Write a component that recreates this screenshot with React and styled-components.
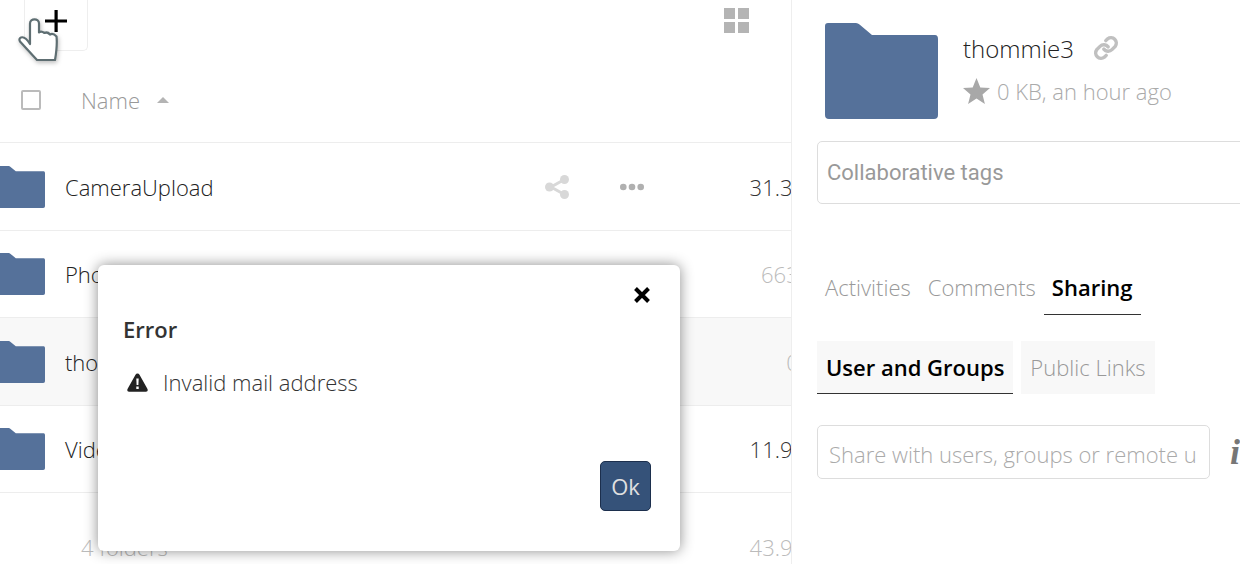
import React from "react";
import styled, { createGlobalStyle } from "styled-components";

const Global = createGlobalStyle`
  html, body { margin: 0; padding: 0; height: 564px; overflow: hidden; background: #fff; }
  body { font-family: "Open Sans", sans-serif; font-weight: 300; font-size: 22px; color: #222; }
  * { box-sizing: border-box; }
`;

const Page = styled.div`
  position: relative;
  display: flex;
  width: 1240px;
  height: 564px;
  overflow: hidden;
`;
const Main = styled.main`
  width: 792px;
  flex: none;
  height: 564px;
  overflow: hidden;
  border-right: 1px solid #eee;
`;
const Toolbar = styled.div`
  display: flex;
  justify-content: space-between;
  height: 57px;
  padding: 0 42px 0 24px;
`;
const AddButton = styled.div`
  width: 64px;
  height: 51px;
  border: 1px solid #eee;
  border-top: none;
  border-radius: 0 0 5px 5px;
  color: #000;
  display: flex;
  align-items: flex-start;
  justify-content: center;
  padding-top: 10px;
`;
const ViewToggle = styled.div`
  margin-top: 8px;
  display: grid;
  grid-template-columns: 11px 11px;
  grid-auto-rows: 11px;
  gap: 3px;
  width: 25px;
  height: 25px;
`;
const Tile = styled.span`
  background: #b4b4b4;
`;
const HeaderRow = styled.div`
  display: flex;
  align-items: center;
  height: 86px;
  padding-left: 21px;
  border-bottom: 1px solid #ededed;
  color: #999;
`;
const Check = styled.span`
  width: 20px;
  height: 20px;
  border: 2px solid #bbb;
  border-radius: 2px;
  margin-right: 40px;
`;
const Caret = styled.span`
  width: 0;
  height: 0;
  margin-left: 17px;
  border-left: 6.5px solid transparent;
  border-right: 6.5px solid transparent;
  border-bottom: 6px solid #b4b4b4;
`;
const Row = styled.div`
  display: flex;
  align-items: center;
  width: 831px;
  height: ${p => p.$h}px;
  border-bottom: 1px solid #ededed;
  background: ${p => (p.$selected ? "#f8f8f8" : "#fff")};
`;
const RowFolder = styled.svg`
  width: 50px;
  height: 42px;
  flex: none;
  margin-left: -5px;
  margin-right: 20px;
`;
const FileName = styled.span`
  flex: 1;
  color: #222;
`;
const Actions = styled.div`
  display: flex;
  align-items: center;
  gap: 51px;
  margin-right: 103px;
`;
const Size = styled.span`
  width: 84px;
  text-align: right;
  white-space: nowrap;
  color: ${p => (p.$faint ? "#bbb" : "#333")};
`;
const Footer = styled.div`
  display: flex;
  align-items: center;
  justify-content: space-between;
  width: 831px;
  height: 72px;
  padding-left: 81px;
  padding-top: 35px;
  color: #bbb;
  font-size: 22px;
`;
const Side = styled.aside`
  flex: 1;
  min-width: 0;
  height: 564px;
  overflow: hidden;
  padding: 23px 0 0 25px;
`;
const Head = styled.div`
  display: flex;
  padding-left: 8px;
`;
const BigFolder = styled.svg`
  width: 113px;
  height: 96px;
  flex: none;
  margin-right: 25px;
`;
const Meta = styled.div`
  padding-top: 5px;
`;
const Title = styled.div`
  display: flex;
  align-items: center;
  gap: 19px;
  font-size: 24px;
  height: 40px;
  color: #222;
`;
const Sub = styled.div`
  display: flex;
  align-items: center;
  gap: 7px;
  height: 46px;
  color: #aaa;
`;
const Tags = styled.div`
  width: 440px;
  height: 63px;
  margin-top: 22px;
  border: 1px solid #ddd;
  border-radius: 5px;
  display: flex;
  align-items: center;
  padding-left: 9px;
  font-family: Roboto, sans-serif;
  font-weight: 400;
  font-size: 22px;
  color: #999;
  white-space: nowrap;
`;
const Tabs = styled.div`
  display: flex;
  margin-top: 59px;
  gap: 0;
`;
const Tab = styled.div`
  padding: 0 8px;
  height: 52px;
  margin-right: ${p => p.$gap || 0}px;
  line-height: 49px;
  color: ${p => (p.$active ? "#000" : "#999")};
  font-weight: ${p => (p.$active ? 600 : 300)};
  border-bottom: ${p => (p.$active ? "1px solid #333" : "none")};
`;
const SubTabs = styled.div`
  display: flex;
  gap: 8px;
  margin-top: 26px;
`;
const SubTab = styled.div`
  height: 53px;
  padding: 0 9px;
  line-height: 52px;
  background: #f8f8f8;
  color: ${p => (p.$active ? "#000" : "#999")};
  font-weight: ${p => (p.$active ? 600 : 300)};
  border-bottom: ${p => (p.$active ? "1px solid #333" : "none")};
`;
const ShareRow = styled.div`
  display: flex;
  align-items: center;
  margin-top: 31px;
`;
const ShareInput = styled.div`
  width: 393px;
  height: 54px;
  flex: none;
  border: 1px solid #ddd;
  border-radius: 5px;
  padding: 0 10px 0 11px;
  line-height: 56px;
  color: #aaa;
  white-space: nowrap;
  overflow: hidden;
`;
const InfoGlyph = styled.span`
  margin-left: 20px;
  font-family: "Liberation Serif", serif;
  font-style: italic;
  font-weight: 700;
  font-size: 36px;
  line-height: 1;
  color: #777;
`;
const Dialog = styled.div`
  position: absolute;
  left: 98px;
  top: 265px;
  width: 582px;
  height: 286px;
  background: #fff;
  border-radius: 6px;
  box-shadow: 0 0 14px rgba(0, 0, 0, 0.45);
  display: flex;
  flex-direction: column;
  padding: 0 29px 40px 25px;
`;
const CloseRow = styled.div`
  display: flex;
  justify-content: flex-end;
  height: 47px;
  padding: 21px 0 0;
`;
const DialogTitle = styled.div`
  font-weight: 600;
  color: #333;
  line-height: 34px;
`;
const Message = styled.div`
  display: flex;
  align-items: center;
  gap: 15px;
  margin-top: 19px;
  line-height: 34px;
  color: #333;
  padding-left: 4px;
`;
const DialogFoot = styled.div`
  margin-top: auto;
  display: flex;
  justify-content: flex-end;
`;
const Ok = styled.div`
  width: 51px;
  height: 50px;
  border: 1px solid #1c2f4d;
  border-radius: 5px;
  background: #355279;
  color: #e0e0e0;
  font-weight: 400;
  display: flex;
  align-items: center;
  justify-content: center;
`;
const Cursor = styled.svg`
  position: absolute;
  left: 14px;
  top: 14px;
  width: 50px;
  height: 54px;
  pointer-events: none;
`;

const FolderShape = () => (
  <path d="M3 0H31Q33 0 34.5 1.5L47 12H110Q113 12 113 16V92Q113 96 109 96H4Q0 96 0 92V3Q0 0 3 0Z" fill="#55719a" transform="translate(0,0)" />
);

const files = [
  { name: "CameraUpload", size: "31.3 MB", h: 88, actions: true },
  { name: "Photos", size: "663 KB", h: 87, faint: true },
  { name: "thommie3", size: "0 KB", h: 88, faint: true, selected: true },
  { name: "Videos", size: "11.9 MB", h: 87 },
];

const ShareIcon = () => (
  <svg width="24" height="24" viewBox="0 0 24 24">
    <path d="M18.5 5 6 12l12.500 7" fill="none" stroke="#d8d8d8" strokeWidth="3" />
    <circle cx="19.500" cy="4.500" r="4.500" fill="#d8d8d8" />
    <circle cx="4.500" cy="12" r="4.500" fill="#d8d8d8" />
    <circle cx="19.500" cy="19.500" r="4.500" fill="#d8d8d8" />
  </svg>
);
const DotsIcon = () => (
  <svg width="24" height="8" viewBox="0 0 24 8">
    <circle cx="3.300" cy="4" r="3.300" fill="#b0b0b0" />
    <circle cx="12" cy="4" r="3.300" fill="#b0b0b0" />
    <circle cx="20.700" cy="4" r="3.300" fill="#b0b0b0" />
  </svg>
);

export default function App() {
  return (
    <Page>
      <Global />
      <Main>
        <Toolbar>
          <AddButton>
            <svg width="22" height="22" viewBox="0 0 22 22" style={{ marginLeft: 0 }}>
              <path d="M9.500 0h3.200v9.400H22v3.200h-9.300V22H9.500v-9.400H0V9.400h9.500z" fill="#000" />
            </svg>
          </AddButton>
          <ViewToggle>
            <Tile /><Tile /><Tile /><Tile />
          </ViewToggle>
        </Toolbar>
        <HeaderRow>
          <Check />
          <span>Name</span>
          <Caret />
        </HeaderRow>
        {files.map(f => (
          <Row key={f.name} $h={f.h} $selected={f.selected}>
            <RowFolder viewBox="0 0 113 96" preserveAspectRatio="none"><FolderShape /></RowFolder>
            <FileName>{f.name}</FileName>
            {f.actions && (
              <Actions>
                <ShareIcon />
                <DotsIcon />
              </Actions>
            )}
            <Size $faint={f.faint}>{f.size}</Size>
          </Row>
        ))}
        <Footer>
          <span>4 folders</span>
          <Size $faint>43.9 MB</Size>
        </Footer>
      </Main>
      <Side>
        <Head>
          <BigFolder viewBox="0 0 113 96"><FolderShape /></BigFolder>
          <Meta>
            <Title>
              thommie3
              <svg width="26" height="26" viewBox="0 0 24 24" fill="none" stroke="#c0c0c0" strokeWidth="3.200" strokeLinecap="round">
                <path d="M10 13a5 5 0 0 0 7.500.5l3-3a5 5 0 0 0-7-7l-1.700 1.700" />
                <path d="M14 11a5 5 0 0 0-7.500-.5l-3 3a5 5 0 0 0 7 7l1.700-1.700" />
              </svg>
            </Title>
            <Sub>
              <svg width="27" height="26" viewBox="0 0 27 26">
                <path d="M13.500 0l3.800 9.500 9.700.6-7.500 6.300 2.400 9.600-8.400-5.400L5.100 26l2.400-9.600L0 10.100l9.700-.6z" fill="#a8a8a8" />
              </svg>
              0 KB, an hour ago
            </Sub>
          </Meta>
        </Head>
        <Tags>Collaborative tags</Tags>
        <Tabs>
          <Tab $gap={1}>Activities</Tab>
          <Tab>Comments</Tab>
          <Tab $active>Sharing</Tab>
        </Tabs>
        <SubTabs>
          <SubTab $active>User and Groups</SubTab>
          <SubTab>Public Links</SubTab>
        </SubTabs>
        <ShareRow>
          <ShareInput>Share with users, groups or remote u</ShareInput>
          <InfoGlyph>i</InfoGlyph>
        </ShareRow>
      </Side>
      <Dialog>
        <CloseRow>
          <svg width="18" height="18" viewBox="0 0 18 18">
            <path d="M2.500 2.500l13 13M15.500 2.500l-13 13" stroke="#000" strokeWidth="4" />
          </svg>
        </CloseRow>
        <DialogTitle>Error</DialogTitle>
        <Message>
          <svg width="21" height="19" viewBox="0 0 21 19">
            <path d="M10.500 0.500q1.400 0 2 1.200l8 14.300q.9 2.500-1.500 2.800H2q-2.400-.3-1.500-2.800l8-14.300q.6-1.200 2-1.200z" fill="#222" />
            <path d="M9.300 5.500h2.400l-.3 6.500H9.600zM9.300 13.500h2.400v2.400H9.300z" fill="#fff" />
          </svg>
          Invalid mail address
        </Message>
        <DialogFoot>
          <Ok>Ok</Ok>
        </DialogFoot>
      </Dialog>
      <Cursor viewBox="14 14 50 54">
        <path
          d="M30 44V23.500C30 18 39 18 39 23.500V32.500Q41 30.500 44.500 33Q47.500 31.500 50 34.500Q53 32.500 56.500 36.500Q57.500 45 55 60H37L20 41.500Q18.500 38.500 21 37.500Q25 36 30 44Z"
          fill="#fff"
          stroke="#5e6e72"
          strokeWidth="2.200"
          strokeLinejoin="round"
          style={{ filter: "drop-shadow(1px 2px 2px rgba(0,0,0,.25))" }}
        />
      </Cursor>
    </Page>
  );
}
